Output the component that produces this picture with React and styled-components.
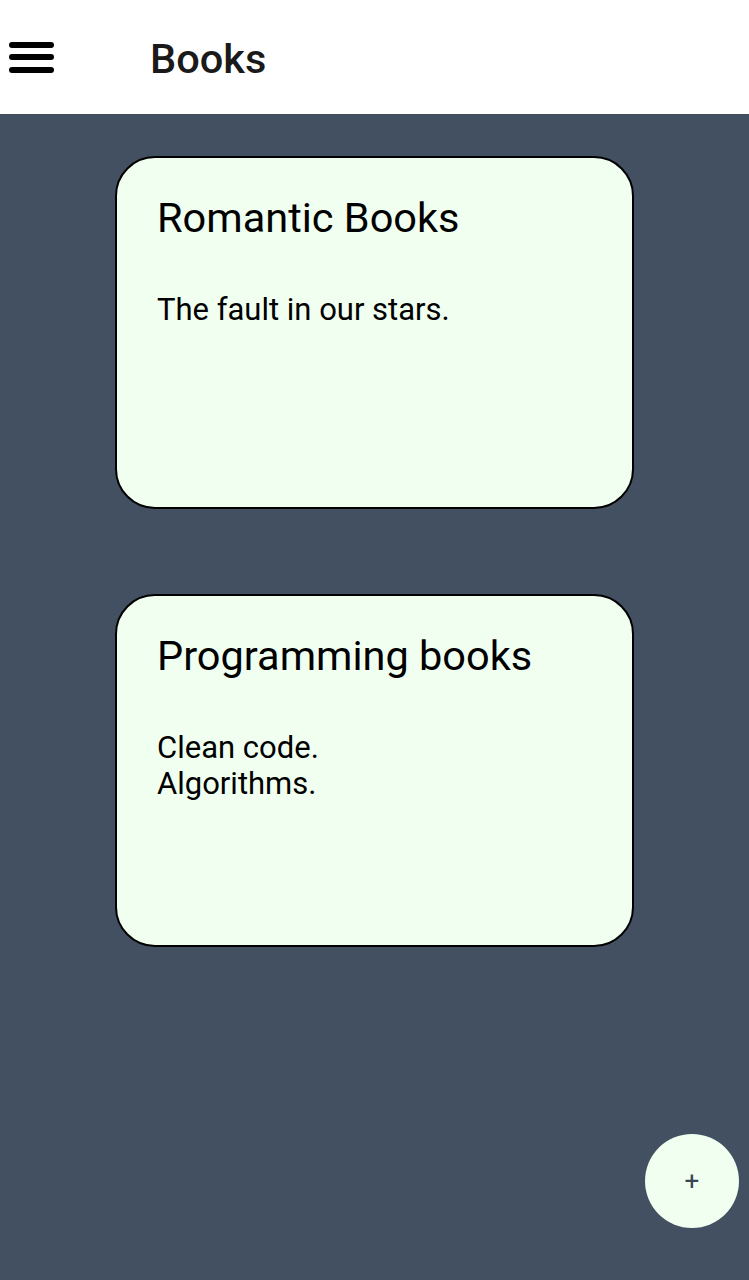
import React from "react";
import styled, { createGlobalStyle } from "styled-components";

const GlobalStyle = createGlobalStyle`
  html, body {
    margin: 0;
    padding: 0;
    background: #435061;
    font-family: Roboto, "Liberation Sans", sans-serif;
  }
`;

const Page = styled.div`
  min-height: 100vh;
  background: #435061;
`;

const Header = styled.header`
  height: 114px;
  background: #ffffff;
  display: flex;
  align-items: center;
  padding-left: 9px;
  gap: 96px;
  h1 {
    margin: 4px 0 0;
    font-size: 41.5px;
    font-weight: 500;
    color: #1a1a1a;
    line-height: 48px;
  }
`;

const Burger = styled.button`
  width: 45px;
  display: flex;
  flex-direction: column;
  gap: 6.5px;
  padding: 0;
  border: none;
  background: none;
  span {
    display: block;
    height: 6px;
    border-radius: 3px;
    background: #000;
  }
`;

const List = styled.main`
  display: flex;
  flex-direction: column;
  align-items: center;
  gap: 85px;
  padding-top: 42px;
`;

const Card = styled.section`
  box-sizing: border-box;
  width: 519px;
  height: 353px;
  background: #f0fff0;
  border: 2px solid #000;
  border-radius: 40px;
  padding: 36px 40px;
  color: #000;
  h2 {
    margin: 0;
    font-size: 41.5px;
    font-weight: 400;
    line-height: 48px;
  }
  p {
    margin: 50px 0 0;
    font-size: 31px;
    line-height: 36px;
  }
`;

const Fab = styled.button`
  position: fixed;
  right: 10px;
  bottom: 52px;
  width: 94px;
  height: 94px;
  border-radius: 50%;
  border: none;
  background: #f0fff0;
  color: #3a4554;
  font-family: Roboto, "Liberation Sans", sans-serif;
  font-size: 26px;
  line-height: 1;
  display: flex;
  align-items: center;
  justify-content: center;
`;

const shelves = [
  { title: "Romantic Books", books: ["The fault in our stars."] },
  { title: "Programming books", books: ["Clean code.", "Algorithms."] },
];

export default function App() {
  return (
    <Page>
      <GlobalStyle />
      <Header>
        <Burger aria-label="menu">
          <span />
          <span />
          <span />
        </Burger>
        <h1>Books</h1>
      </Header>
      <List>
        {shelves.map((s) => (
          <Card key={s.title}>
            <h2>{s.title}</h2>
            <p>
              {s.books.map((b, i) => (
                <React.Fragment key={b}>
                  {i > 0 && <br />}
                  {b}
                </React.Fragment>
              ))}
            </p>
          </Card>
        ))}
      </List>
      <Fab>+</Fab>
    </Page>
  );
}
